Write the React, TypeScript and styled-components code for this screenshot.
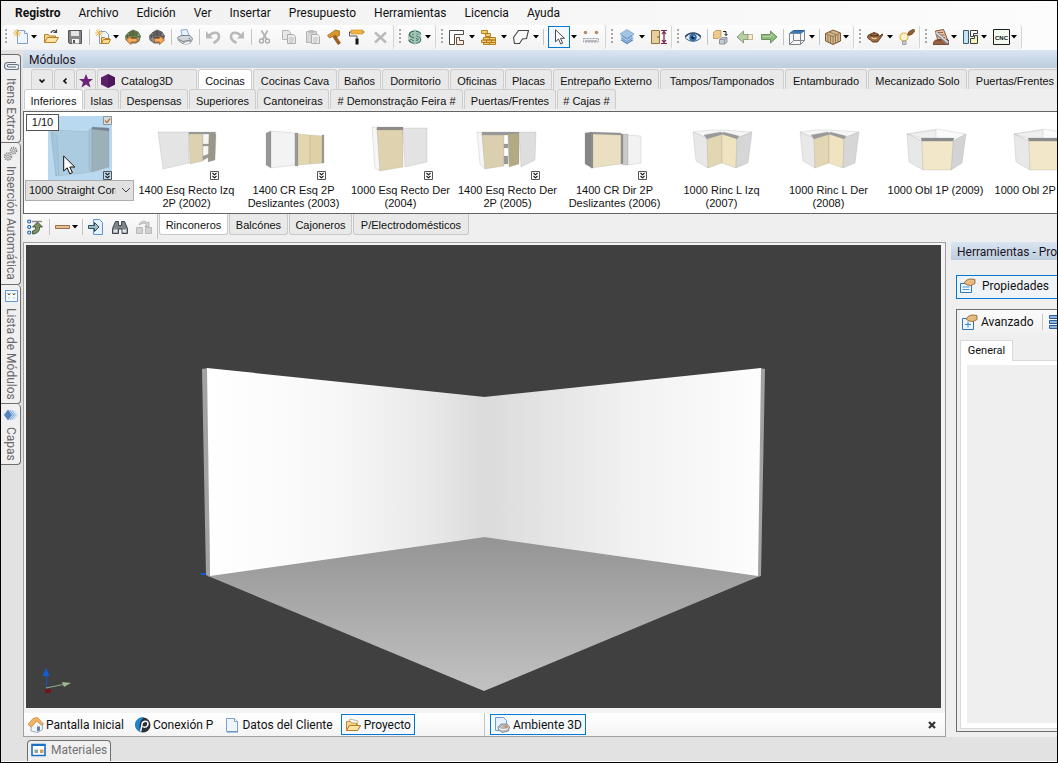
import React from "react";
import styled, { createGlobalStyle, css } from "styled-components";

const UI = 'Roboto, "Noto Sans", sans-serif';
const TAB = '"Liberation Sans", Arial, sans-serif';

const Global = createGlobalStyle`
  * { box-sizing: border-box; }
  body { margin: 0; background: #efefef; color: #111; font: 12px/16px ${UI}; }
  button, select { font: inherit; color: inherit; margin: 0; padding: 0; border: 0; background: none; border-radius: 0; }
  svg { display: block; flex: none; }
`;

/* ---------- window frame ---------- */

const Frame = styled.div`
  height: 100vh;
  min-height: 600px;
  display: flex;
  flex-direction: column;
  border: 1px solid #000;
  overflow: hidden;
  background: #efefef;
`;
const MenuBar = styled.nav`
  flex: none;
  display: flex;
  align-items: center;
  height: 24px;
  padding-left: 5px;
  background: linear-gradient(90deg, #f0f0f0, #fcfcfc);
`;
const MenuItem = styled.button<{ $bold?: boolean }>`
  padding: 0 9px;
  line-height: 22px;
  font-weight: ${(p) => (p.$bold ? 700 : 400)};
  white-space: nowrap;
`;
const ToolBar = styled.div`
  flex: none;
  display: flex;
  gap: 4px;
  height: 25px;
  padding: 0 0 1px 2px;
  background: linear-gradient(90deg, #f0f0f0, #fcfcfc);
`;
const Strip = styled.div`
  flex: none;
  display: flex;
  align-items: center;
  padding-right: 2px;
  border-radius: 3px;
  background: linear-gradient(#fdfdfd, #f3f3f3);
  box-shadow: 1px 0 0 #d4d4d4;
`;
const Grip = styled.span`
  flex: none;
  width: 2px;
  height: 16px;
  margin: 0 2px;
  background: repeating-linear-gradient(#a8a8a8 0 2px, transparent 2px 4px);
`;
const ToolButton = styled.button<{ $w?: number }>`
  flex: none;
  display: flex;
  align-items: center;
  width: ${(p) => p.$w ?? 24}px;
  height: 22px;
  padding-left: 4px;
`;
const ActiveTool = styled(ToolButton)`
  width: 22px;
  margin-left: 3px;
  padding-left: 2px;
  border: 1px solid #0078d7;
  background: #f4f8fc;
`;
const CaretButton = styled.button`
  flex: none;
  display: flex;
  align-items: center;
  width: 9px;
  height: 22px;
`;
const Separator = styled.span`
  flex: none;
  width: 1px;
  height: 16px;
  margin: 0 1px 0 2px;
  background: #c4c4c4;
`;

/* ---------- body ---------- */

const Body = styled.div`
  flex: 1;
  min-height: 0;
  display: flex;
`;
const Rail = styled.aside`
  flex: none;
  display: flex;
  flex-direction: column;
  width: 22px;
  padding-top: 4px;
  background: #e2e2e2;
`;
const RailTab = styled.button<{ $h: number }>`
  display: flex;
  flex-direction: column;
  align-items: center;
  gap: 4px;
  width: 20px;
  height: ${(p) => p.$h}px;
  padding-top: 3px;
  border: 1px solid #6e6e6e;
  border-left: 0;
  border-radius: 0 4px 4px 0;
  background: #f0f0f0;
  color: #686868;
  & + & { border-top: 0; }
  span { writing-mode: vertical-rl; line-height: 18px; white-space: nowrap; }
`;
const Main = styled.main`
  flex: 1;
  min-width: 0;
  display: flex;
  flex-direction: column;
`;
const Caption = styled.h2`
  flex: none;
  height: 18px;
  margin: 0;
  padding-left: 6px;
  font: 12px/20px ${UI};
  color: #1c1326;
  white-space: nowrap;
  overflow: hidden;
  background: linear-gradient(#dae5f1, #bccddd);
`;
const TabRow = styled.div<{ $indent?: number }>`
  flex: none;
  display: flex;
  height: 20px;
  gap: 1px;
  padding-left: ${(p) => p.$indent ?? 0}px;
  overflow: hidden;
`;
const TabRowTop = styled(TabRow)`
  margin-top: 1px;
`;
const Tab = styled.button<{ $w: number; $on?: boolean; $left?: boolean }>`
  flex: none;
  display: flex;
  align-items: center;
  justify-content: ${(p) => (p.$left ? "flex-start" : "center")};
  gap: 5px;
  width: ${(p) => p.$w}px;
  height: 21px;
  padding: 2px 2px 0;
  border: 1px solid #cdcdcd;
  border-bottom: 0;
  border-radius: 3px 3px 0 0;
  background: #e9e9e9;
  font-family: ${TAB};
  font-size: 11px;
  white-space: nowrap;
  ${(p) => p.$on && css`background: #fff;`}
`;
const BottomTab = styled(Tab)`
  border: 1px solid #c8c8c8;
  border-top: 0;
  border-radius: 0 0 3px 3px;
`;
const Gallery = styled.section`
  flex: none;
  position: relative;
  height: 103px;
  margin-top: 2px;
  border: 1px solid #646464;
  border-right: 0;
  background: #fff;
  overflow: hidden;
`;
const Items = styled.ul`
  display: flex;
  margin: 0;
  padding: 4px 0 0 2px;
  list-style: none;
`;
const Item = styled.li`
  flex: none;
  position: relative;
  display: flex;
  flex-direction: column;
  align-items: center;
  width: 107px;
  font: 11px/13px ${TAB};
  text-align: center;
`;
const ItemName = styled.span`
  width: 104px;
  padding-top: 4px;
`;
const Thumb = styled.div<{ $on?: boolean }>`
  position: relative;
  width: 64px;
  height: 64px;
  background: ${(p) => (p.$on ? "#b9d9f1" : "#fff")};
`;
const Corner = styled.span<{ $top?: boolean }>`
  position: absolute;
  right: 0;
  ${(p) => (p.$top ? "top: 0;" : "bottom: 0;")}
`;
const Counter = styled.span`
  position: absolute;
  z-index: 1;
  top: 2px;
  left: 2px;
  width: 33px;
  border: 1px solid #555;
  background: #fff;
  font: 11px/15px ${TAB};
  text-align: center;
`;
const SelectWrap = styled.label`
  position: relative;
  display: block;
  width: 109px;
  svg { position: absolute; right: 3px; top: 6px; pointer-events: none; }
`;
const VariantSelect = styled.select`
  appearance: none;
  display: block;
  width: 100%;
  height: 21px;
  padding: 0 17px 0 3px;
  border: 1px solid #adadad;
  background: #e1e1e1;
  font: 11px/13px ${TAB};
`;
const Pointer = styled.span`
  position: absolute;
  top: 39px;
  left: 37px;
`;
const GroupBar = styled.div`
  flex: none;
  display: flex;
  align-items: flex-start;
  height: 28px;
`;
const GroupTools = styled.div`
  display: flex;
  align-items: center;
  width: 135px;
  height: 25px;
  border-right: 1px solid #c4c4c4;
  background: linear-gradient(#fbfbfb, #efefef);
`;
const Groups = styled.div`
  display: flex;
  gap: 1px;
  padding-left: 1px;
`;
const Workspace = styled.div`
  flex: 1;
  min-height: 0;
  display: flex;
  gap: 5px;
`;
const ViewPanel = styled.section`
  flex: 1;
  min-width: 0;
  display: flex;
  flex-direction: column;
  border: 1px solid #a0a0a0;
  background: #f3f3f3;
`;
const Canvas = styled.div`
  flex: 1;
  min-height: 0;
  display: flex;
  margin: 2px 4px 5px 2px;
  background: #404040;
  svg { flex: 1; min-width: 0; height: 100%; }
`;
const DocBar = styled.div`
  flex: none;
  display: flex;
  height: 23px;
  background: linear-gradient(#fff, #f4f4f4);
`;
const DocGroup = styled.div`
  display: flex;
  align-items: center;
  width: 461px;
  padding-left: 1px;
  gap: 5px;
  border-right: 1px solid #c4c4c4;
`;
const DocTab = styled.button<{ $on?: boolean }>`
  display: flex;
  align-items: center;
  gap: ${(p) => (p.$on ? 3 : 2)}px;
  height: 21px;
  padding: 0 ${(p) => (p.$on ? 3 : 2)}px;
  border: 1px solid ${(p) => (p.$on ? "#0078d7" : "transparent")};
  background: ${(p) => (p.$on ? "#f6fafd" : "none")};
  white-space: nowrap;
`;
const DocOpen = styled.div`
  flex: 1;
  display: flex;
  align-items: center;
  justify-content: space-between;
  padding: 0 9px 0 5px;
`;
const SidePanel = styled.aside`
  flex: none;
  width: 106px;
  display: flex;
  flex-direction: column;
  overflow: hidden;
`;
const ModeButton = styled.button`
  flex: none;
  display: flex;
  align-items: center;
  gap: 6px;
  height: 24px;
  margin: 15px 0 10px 5px;
  padding: 0 0 2px 3px;
  border: 1px solid #0078d7;
  border-right: 0;
  background: #f0f3f6;
`;
const PropBox = styled.div`
  flex: 1;
  min-height: 0;
  display: flex;
  flex-direction: column;
  margin: 0 0 5px 5px;
  padding: 0 0 2px 3px;
  border: 1px solid #6e6e6e;
  border-right: 0;
`;
const PropTools = styled.div`
  flex: none;
  display: flex;
  align-items: center;
  height: 24px;
  margin-bottom: 6px;
  background: linear-gradient(#fbfbfb, #f1f1f1);
`;
const PropTool = styled.button`
  flex: none;
  display: flex;
  align-items: center;
  gap: 3px;
  padding: 0 6px 0 2px;
`;
const RowsTool = styled(PropTool)`
  padding-left: 5px;
`;
const PropTab = styled.button`
  flex: none;
  width: 53px;
  height: 21px;
  margin-bottom: -1px;
  border: 1px solid #d9d9d9;
  border-bottom: 0;
  background: #fff;
  font: 11px/16px ${UI};
  z-index: 1;
`;
const PropPage = styled.div`
  flex: 1;
  padding: 4px 0 5px 6px;
  display: flex;
  border: 1px solid #d9d9d9;
  border-right: 0;
  background: #fff;
`;
const PropEmpty = styled.div`
  flex: 1;
  background: #efefef;
`;
const Dock = styled.footer`
  flex: none;
  display: flex;
  align-items: flex-end;
  height: 25px;
  padding-left: 26px;
  border-bottom: 1px solid #fff;
  background: #e2e2e2;
`;
const DockTab = styled.button`
  display: flex;
  align-items: center;
  gap: 4px;
  width: 84px;
  height: 21px;
  padding: 0 0 2px 3px;
  border: 1px solid #6e6e6e;
  border-bottom: 0;
  border-radius: 4px 4px 0 0;
  background: #f0f0f0;
  color: #727272;
`;

/* ---------- icons ---------- */

const page = <path d="M4.500 1.500h7l3 3v10h-10z" fill="#eef5fc" stroke="#7fa0c8" />;
const spark = <path d="M4 0v8M0 4h8M1 1l6 6M7 1L1 7" stroke="#eab043" strokeWidth=".9" />;
const folder = (
  <>
    <path d="M1.500 13.500v-8h4l1 1.500h6v2" fill="#f5d38c" stroke="#b97f26" />
    <path d="M1.500 13.500l3-5h11l-3 5z" fill="#fde3a4" stroke="#b97f26" />
  </>
);
const box = (c: string, d: string, hi: string) => (
  <>
    <path d="M3.500 3.500L8 1l5 2 2.500 4-1.500 5-3 2H5l-4-3-.5-4z" fill={c} stroke={d} strokeWidth=".8" />
    <path d="M4 4l4-2 4.500 2-1 3H5z" fill={hi} stroke={d} strokeWidth=".7" />
    <path d="M1 7l4 0M11.500 7l3.500 1M3 5.500l-1 4M8 2.500V7M4 8.500h8" stroke={d} />
  </>
);

const art: Record<string, React.ReactNode> = {
  newDoc: <>{page}<path d="M11.500 1.500v3h3" fill="#fff" stroke="#7fa0c8" />{spark}</>,
  open: <>{folder}<path d="M8 4c1-3 4-3 5-1M13.500.5v3h-3" stroke="#444" strokeWidth="1.200" /></>,
  save: <><path d="M1.500 1.500h13v13h-12l-1-1z" fill="#858585" stroke="#565656" /><path d="M4 2h8v5H4z" fill="#e4e4e4" /><path d="M5 10h7v4.500H5z" fill="#f4f4f4" /><path d="M6 11h2v3H6z" fill="#555" /></>,
  importDoc: <><path d="M4.500 2.500h6l3 3v9h-9z" fill="#eef5fc" stroke="#7fa0c8" /><path d="M6.500 14.500v-6h3l1 1h4v1M6.500 14.500l2-4h7l-2 4z" fill="#fbd98e" stroke="#b97f26" />{spark}</>,
  boxIn: <>{box("#8da274", "#4a5b37", "#5f7348")}<path d="M1 11l5-4v2.500h6v3.500H6v2.500z" fill="#f3ab5e" stroke="#b05f22" strokeWidth=".8" /></>,
  boxOut: <>{box("#8c8c8c", "#4a4a4a", "#616161")}<path d="M15.500 11l-5-4v2.500h-5v3.500h5v2.500z" fill="#f3ab5e" stroke="#b05f22" strokeWidth=".8" /></>,
  print: <><path d="M4 1l6-.5 2 6H5z" fill="#e8f2fc" stroke="#6e9cc8" strokeWidth=".8" /><path d="M.5 8.500L4 6.500h9l2.500 3-1 3-9 2-4-3z" fill="#d4d6da" stroke="#6f7680" strokeWidth=".8" /><path d="M2 10.500l4 2 8-1.500" stroke="#7c838c" /><path d="M6 14l6-2 2 2-6 1.500z" fill="#fff" stroke="#8b97a6" strokeWidth=".6" /><circle cx="12.500" cy="9.500" r=".8" fill="#4a9ad8" /></>,
  undo: <><path d="M1 2v7.500h7z" fill="#b9b9b9" /><path d="M4 7.500C7 2.500 14 2.500 14 7.500c0 3-2.500 5-5.500 6.500" stroke="#b9b9b9" strokeWidth="2.600" /></>,
  redo: <><path d="M15 2v7.500H8z" fill="#b9b9b9" /><path d="M12 7.500C9 2.500 2 2.500 2 7.500c0 3 2.500 5 5.500 6.500" stroke="#b9b9b9" strokeWidth="2.600" /></>,
  cut: <><path d="M4.500 1.500l5 8.500M10.500 1.500L6 10" stroke="#b4b4b4" strokeWidth="1.800" /><circle cx="4.500" cy="12" r="2" stroke="#adadad" strokeWidth="1.400" /><circle cx="10.500" cy="12" r="2" stroke="#adadad" strokeWidth="1.400" /></>,
  copy: <><path d="M1.500 1.500h6l2 2v7h-8z" fill="#e6e6e6" stroke="#b5b5b5" /><path d="M6.500 5.500h6l2 2v7h-8z" fill="#e9e9e9" stroke="#adadad" /><path d="M8 9h5M8 11h5M8 13h4" stroke="#bcbcbc" /></>,
  paste: <><path d="M1.500 2.500h10v11h-10z" fill="#d7d7d7" stroke="#b5b5b5" /><path d="M4 1h5v3H4z" fill="#bdbdbd" /><path d="M6.500 5.500h6l2 2v7h-8z" fill="#efefef" stroke="#adadad" /><path d="M8 9h5M8 11h5M8 13h4" stroke="#bcbcbc" /></>,
  hammer: <><path d="M.5 6.500l8-5.500 4 1v4.500l-4 2-2-1.500-4 2z" fill="#d8962c" stroke="#96601a" strokeWidth=".7" /><path d="M6 8l2.500-1.500 5 7.500-2.500 1.500z" fill="#a8621d" stroke="#75420f" strokeWidth=".6" /></>,
  roller: <><path d="M2 1h12v4H2z" fill="#f0b53c" stroke="#c88a1c" strokeWidth=".6" /><path d="M2 3H.5v4h7.500v3M14 3h1.500" stroke="#555" /><path d="M6.500 9.500h3v6h-3z" fill="#151515" /></>,
  del: <path d="M2 3.500l11 10M13 3.500l-11 10" stroke="#b9b9b9" strokeWidth="2.400" />,
  money: <><circle cx="7.500" cy="8" r="6.800" fill="#b6cfc2" /><path d="M12.500 5.500C12 2.500 3.500 2.500 3.500 5.500s9 2 9 5-8.500 3.500-9.500 0" stroke="#41706a" strokeWidth="3.600" /><path d="M12.500 5.500C12 3 4 3 4 5.500s8.500 2 8.500 5-8 3-9 .5M8 .5v15" stroke="#a4cab5" strokeWidth="1.700" /></>,
  wall: <><path d="M.5 1.500h14v4h-9v10h-5z" fill="#fff" stroke="#4d4d4d" /><path d="M7.500 8.500h3v3h4v4h-7z" fill="#f5efe9" stroke="#6b4a36" /></>,
  bricks: <g fill="#f7cd6c" stroke="#ad761a" strokeWidth=".9"><path d="M.5 1.500h6v3h-6zM4.500 4.500h5v3h-5zM2.500 8.500h6v2.500h-6zM8.500 8.500h6v2.500h-6zM.5 11h5v2.500h-5zM5.500 11h5v2.500h-5zM10.500 11h4v2.500h-4zM2.500 13.500h6v2h-6zM8.500 13.500h6v2h-6z" /></g>,
  shape: <path d="M5.500 1.500h10l-2 8-4 .5-3 4.500h-5l-1-6z" fill="#f9f9f9" stroke="#454545" strokeWidth="1.100" />,
  cursor: <path d="M4.500.8v12l3-2.800 2.200 5 2-.9-2.200-4.800h4z" fill="#fff" stroke="#4a4a4a" />,
  ruler: <><path d="M.5 9.500h15v3.500H.5z" fill="#eceef1" stroke="#9aa0aa" strokeDasharray="2 1" /><path d="M3 11v2M5 11v2M7 11v2M9 11v2M11 11v2M13 11v2" stroke="#8a9099" /><circle cx="2.500" cy="3.500" r="1.800" fill="#b98a5e" /><circle cx="13.500" cy="3.500" r="1.800" fill="#b98a5e" /></>,
  layers: <g stroke="#fff" strokeWidth=".6"><path d="M1 11l7-4.500 7 4.500-7 4.500z" fill="#3f73b0" /><path d="M1 9l7-4.500L15 9l-7 4.500z" fill="#5b8cc4" /><path d="M1 7l7-4.500L15 7l-7 4.500z" fill="#7ea7d3" /><path d="M1 5l7-4.500L15 5 8 9.500z" fill="#a5c4e2" stroke="#5f8fc4" /></g>,
  door: <><path d="M.5 1.500h8v13h-8z" fill="#e8cd9f" stroke="#96703f" /><circle cx="7" cy="8" r=".8" fill="#694718" /><path d="M10 1.500h6M10 14.500h6M13 2v12M11 5l2-2.500L15 5M11 11l2 2.500 2-2.500" stroke="#7a1f48" strokeWidth="1.200" /></>,
  eye: <><path d="M0 8.500C4 3 12 3 16 8.500c-4 5-12 5-16 0z" fill="#dfeaf5" stroke="#47627f" /><path d="M0 8C4 2.500 12 2.500 16 8" stroke="#2f4660" strokeWidth="1.400" /><circle cx="8" cy="8.500" r="3.700" fill="#2d6cab" /><circle cx="8" cy="8.500" r="1.600" fill="#0c1e36" /><circle cx="9" cy="7.500" r=".7" fill="#fff" /></>,
  blocks: <><path d="M.5 3.500l2.500-2h5v6l-2.500 2h-5z" fill="#f1c78a" stroke="#b5834a" strokeWidth=".7" /><path d="M6.500 10.500l2.500-2h5v4.500l-2.500 2h-5z" fill="#c6ccd4" stroke="#6e757f" strokeWidth=".7" /><path d="M6.500 10.500h5v4.500M11.500 10.500l2.500-2" stroke="#7c838c" strokeWidth=".7" /><path d="M10 2.500h3v4M11.500 5l1.500 1.500L14.500 5" stroke="#222" /></>,
  back: <><path d="M0 8l6.500-6v3.500H11v5H6.500V14z" fill="#b9cfa6" stroke="#76906a" strokeWidth=".8" /><path d="M11 5.500h4.500v5H11z" fill="#f6edcf" stroke="#a39a7c" strokeWidth=".7" /></>,
  forward: <><path d="M16 8L9.500 2v3.500H.5v5h9V14z" fill="#8dbb7c" stroke="#557f47" strokeWidth=".8" /><path d="M2 7.500h8V5l3 3" stroke="#bfdcb1" strokeWidth=".8" /></>,
  cube: <><path d="M.5 4.500l4-3h11l-4 3z" fill="#2e7cc8" stroke="#3a5d84" /><path d="M.5 4.500h11v11H.5zM15.500 1.500v10l-4 4M4.500 4.500v7M.5 15.500l4-4h11" stroke="#7c858e" /></>,
  wood: <><path d="M.5 4.500L8 1l7.500 3v8L8 15.500.5 12z" fill="#d3b78d" stroke="#6c4c2a" strokeWidth=".9" /><path d="M.5 4.500L8 7.500l7.500-3.500M8 7.500v8M3 6v7M5.500 7v7.500M10.500 7v7M13 6v7M4 3l8 3" stroke="#8a6a44" strokeWidth=".8" /></>,
  teapot: <><path d="M3 5.500c2-2 7-2 8.500 0l1 2L15 5l1 .5-3.500 5L10.500 13h-5L3 10.500C0 10-.5 6 3 5.500z" fill="#9c6c45" stroke="#54321a" strokeWidth=".9" /><path d="M3 6c2.500 1.200 6 1.200 8.500 0M7 3v1.500" stroke="#4f2c13" strokeWidth="1.200" /><path d="M4.500 8.500c1 1 3 1.500 5 .5" stroke="#ecc59a" strokeWidth="1.400" /></>,
  bulb: <><circle cx="5" cy="8" r="4" fill="#fef2cd" stroke="#e3b450" strokeWidth="1.200" /><path d="M3.500 12H7v3.500H3.500z" fill="#c9cdd2" stroke="#7f858c" strokeWidth=".7" /><path d="M8.500 5.500l1.500-3L14.500 0 16 1.500 13.500 5 10 6.500z" fill="#95602f" stroke="#4d2b10" strokeWidth=".6" /></>,
  saw: <><path d="M2.500 2l8-1.500 4 10h-10z" fill="#e5c3a8" stroke="#7a4326" strokeWidth=".9" /><path d="M5 3.500h5M5.500 6h6M6 8.500h6" stroke="#94593a" strokeWidth=".9" /><path d="M0 15.500c1-4 2-4.500 4-4.500h11.500v4.500z" fill="#9b6044" stroke="#532612" strokeWidth=".7" /><path d="M3 4l12 10" stroke="#8d9096" strokeWidth="3" /><path d="M3 3.500l12 10" stroke="#dfe1e4" strokeWidth="1.200" /></>,
  panels: <><path d="M.5 1.500h5v13h-5z" fill="#c4e4f5" stroke="#3f5a68" /><path d="M7.500 1.500h7v3h-4v3h-3z" fill="#fff" stroke="#3d3d3d" /><path d="M7.500 9.500h4v-3h3v8h-7z" fill="#f6f1bd" stroke="#3d3d3d" /></>,
  sort: <><path d="M5 2.500h10" stroke="#8b8b8b" strokeWidth="1.400" /><path d="M10.500 3l5 5h-3c.5 4.500-3 7-7 7v-3c2.500-.5 3.500-1.500 3-4h-3z" fill="#7d9160" stroke="#33422a" strokeWidth=".8" /><g fill="#fff" stroke="#1b61ab" strokeWidth="1.200"><circle cx="2.200" cy="2.500" r="1.500" /><circle cx="2.200" cy="8" r="1.500" /><circle cx="2.200" cy="13.500" r="1.500" /></g></>,
  plank: <path d="M.5 6.500h14v3H.5z" fill="#e2bf95" stroke="#9a7148" />,
  goTo: <><path d="M5.500.500h6l3 3v12h-9z" fill="#e5f2fc" stroke="#5f97cc" /><path d="M.5 6.500h6v-3l4.500 4.500-4.500 4.500v-3h-6z" fill="#9dbcc8" stroke="#2e505f" /></>,
  binoculars: <><path d="M3.500 2.500h3v4h3v-4h3l3 7v5h-5.500V10h-3.500v4.500H.5v-5z" fill="#7e848c" stroke="#33373d" strokeWidth=".9" /><path d="M1.500 10.500h4v3h-4zM10.500 10.500h4v3h-4z" fill="#dfe4e9" /></>,
  swap: <g fill="#d2d2d2" stroke="#b9b9b9"><path d="M.5 8.500h6v6h-6zM9.500 8.500h6v6h-6z" /><path d="M3 6c1-4 6-5 8-2l2-1v4.500H9L10.500 5.500C8.500 3.500 6 4 3 6z" /></g>,
  clip: <path d="M13 4.500H5a3.500 3.500 0 000 7h8.500a2.500 2.500 0 000-5h-8a1.200 1.200 0 000 2.500H13" stroke="#68708a" strokeWidth="1.100" />,
  gears: <g stroke="#8b8b8b" strokeWidth="1"><circle cx="10.500" cy="4.500" r="3" strokeDasharray="1.400 .8" strokeWidth="1.800" /><circle cx="10.500" cy="4.500" r="1.200" /><circle cx="5" cy="10.500" r="3.300" strokeDasharray="1.400 .8" strokeWidth="1.800" /><circle cx="5" cy="10.500" r="1.400" /></g>,
  list: <><path d="M2.500 2.500h12v11h-12z" fill="#f4faff" stroke="#6797c9" /><path d="M5 5h2v2H5zM10 5h2v2h-2z" fill="#7d6a42" /><path d="M4 5.500h4M9 5.500h4" stroke="#a7bbb0" /><path d="M5 10h2M10 10h2" stroke="#a7c4de" /></>,
  layersSide: <g stroke="#fff" strokeWidth=".7"><path d="M11 2l4.500 6L11 14 6.500 8z" fill="#bdd5ec" /><path d="M9 2l4.500 6L9 14 4.500 8z" fill="#93b7de" /><path d="M7 2l4.500 6L7 14 2.500 8z" fill="#6e9bcd" /><path d="M5 2l4.500 6L5 14 .5 8z" fill="#5385bf" /></g>,
  house: <><path d="M3 7v7l7 1.500 4.500-3V7L9.500 3z" fill="#f2f5f9" stroke="#7d93ad" strokeWidth=".7" /><path d="M0 7.500l5-6 4.500-1 6 6.500-2 1L8.500 4 3.500 10z" fill="#f4b561" stroke="#bd7a29" strokeWidth=".7" /><path d="M9 9.500h3v4l-3 1z" fill="#5b82ad" /></>,
  globe: <><circle cx="8" cy="8" r="7.500" fill="#2b3138" /><path d="M9 .5A7.500 7.500 0 006 15.200C3.500 11 4 4 9 .5z" fill="#1f85d0" /><path d="M5.500 14.500c1-3 1-6 2-9 4-2.500 6.500-.5 5 3-1 2-3.500 2-5 1" stroke="#fff" strokeWidth="1.500" /></>,
  doc: <><path d="M2.500 1.500h8l3 3v10h-11z" fill="#eef5fd" stroke="#7fa0c8" /><path d="M10.500 1.500v3h3" stroke="#7fa0c8" fill="#fff" /><path d="M3 15h11" stroke="#5b87bd" /></>,
  folder: <>{folder}<path d="M3 7l2-5 8 2-1 4.500" fill="#fff" stroke="#b9a37a" strokeWidth=".8" /><path d="M1.500 13.500v-9h4l1 1.500h5v2.500h-7z" fill="#f8d58e" stroke="#b97f26" strokeWidth=".8" /><path d="M1.500 13.500l3-5h11l-3 5z" fill="#fde3a4" stroke="#b97f26" /></>,
  render: <><path d="M1.500.500h8l3 3v10h-11z" fill="#e5f1fc" stroke="#6c9cd0" /><path d="M4 10l3-3h6l2.500 3-1 4-6 1.500-4-2.500z" fill="#b7bbc1" stroke="#7b838d" strokeWidth=".8" /><path d="M5 11.500l4 1.500 5-1.500" stroke="#fff" /><circle cx="12" cy="10" r="1.400" fill="#d98b3f" /></>,
  props: <><path d="M.5 5.500h11v9H.5z" fill="#eef6fd" stroke="#2b78bd" /><path d="M2.500 9h7M2.500 11.500h7" stroke="#5b97cf" /><path d="M4 5c2-3 4-4 7-4l4 .5v4l-4 2-4-.5z" fill="#e8bc80" stroke="#8a5a26" strokeWidth=".8" /></>,
  propsPlus: <><path d="M.5 4.500h11v11H.5z" fill="#eef6fd" stroke="#2b78bd" /><path d="M6 7.500v6M3 10.500h6" stroke="#3c84c5" /><path d="M4 5c2-3 4-4 7-4l4 .5v4l-4 2-4-.5z" fill="#e8bc80" stroke="#8a5a26" strokeWidth=".8" /></>,
  rows: <g fill="#8eb4dd" stroke="#2b5e99"><path d="M.5 1.500h15v3H.5zM.5 6.500h15v3H.5zM.5 11.500h15v3H.5z" /></g>,
  materials: <><path d="M1 2.500h13v11H1z" fill="#fff" stroke="#1c70c4" strokeWidth="1.600" /><path d="M1 3h13" stroke="#1c70c4" strokeWidth="2" /><path d="M3.500 7.500h3.500v3.500H3.500z" fill="#8fa38e" /><path d="M9 7.500h3.500v3.500H9z" fill="#d99a60" /></>,
  star: <path d="M8 1l2 5h5l-4 3.300 1.500 5.200L8 11.500l-4.500 3L5 9.300 1 6h5z" fill="#6b2477" />,
  hex: <><path d="M8 1l7 3.500v7L8 15l-7-3.500v-7z" fill="#5c2069" /><path d="M8 1l7 3.500v7L8 15z" fill="#4d1859" /></>,
  down: <path d="M5.500 6.500L8 9l2.500-2.500" stroke="#111" strokeWidth="1.700" />,
  left: <path d="M9.500 5.500L7 8l2.500 2.500" stroke="#111" strokeWidth="1.700" />,
  close: <path d="M5 5l6 6M11 5l-6 6" stroke="#333" strokeWidth="2.200" />,
};

const Icon = ({ name }: { name: string }) => (
  <svg width="16" height="16" viewBox="0 0 16 16" fill="none" aria-hidden="true">{art[name]}</svg>
);
const CncIcon = () => (
  <svg width="17" height="16" viewBox="0 0 17 16" aria-hidden="true">
    <path d="M.5.5h16v15H.5z" fill="#f3faf0" stroke="#1e1e1e" />
    <text x="8.500" y="11" textAnchor="middle" fontFamily="Liberation Sans" fontSize="6" fontWeight="700" fill="#111">CNC</text>
  </svg>
);
const Caret = ({ label }: { label: string }) => (
  <CaretButton aria-label={label}>
    <svg width="7" height="4" viewBox="0 0 7 4"><path d="M1 0h6L4 3.500z" fill="#000" /></svg>
  </CaretButton>
);

/* ---------- toolbar data ---------- */

type Tool = { i: string; w?: number; caret?: boolean; on?: boolean; sep?: boolean };
const strips: Tool[][] = [
  [
    { i: "newDoc", w: 21, caret: true }, { i: "open" }, { i: "save" },
    { i: "importDoc", w: 21, caret: true, sep: true }, { i: "boxIn" }, { i: "boxOut" },
    { i: "print", sep: true }, { i: "undo", sep: true }, { i: "redo" },
    { i: "cut", sep: true }, { i: "copy" }, { i: "paste", w: 22 }, { i: "hammer", w: 22 }, { i: "roller" }, { i: "del", w: 22 },
  ],
  [{ i: "money", w: 21, caret: true }],
  [
    { i: "wall", w: 23, caret: true }, { i: "bricks", w: 23, caret: true }, { i: "shape", w: 23, caret: true },
    { i: "cursor", on: true, caret: true, sep: true }, { i: "ruler" },
  ],
  [{ i: "layers", w: 23, caret: true }, { i: "door", w: 22 }],
  [
    { i: "eye" }, { i: "blocks", sep: true }, { i: "back" }, { i: "forward" },
    { i: "cube", w: 23, caret: true, sep: true }, { i: "wood", w: 21, caret: true, sep: true },
  ],
  [{ i: "teapot", w: 23, caret: true }, { i: "bulb", w: 22 }],
  [{ i: "saw", w: 21, caret: true }, { i: "panels", w: 21, caret: true }, { i: "cnc", w: 21, caret: true }],
];

/* ---------- module thumbnails ---------- */

const W = "#e8e8e8", L = "#f6f6f6", B = "#eadfc0", D = "#9a9a9a";
type Face = [string, string];
const straight: Face[] = [["3,16 9,14 44,16 44,56 8,60", "#abcce0"], ["3,16 9,20 11,58 8,60", "#a3c6dc"], ["41,14 44,12 44,56 41,54", "#a2c4da"], ["44,12 61,13 61,51 44,56", "#9bb0b8"], ["44,11 61,12 61,15 44,13", "#72829a"]];
const rincon: Face[] = [["3,16 20,14 33,14 62,16 47,22 32,18 17,22", L], ["3,16 17,22 18,52 6,45", W], ["17,22 32,18 32,47 18,52", "#e2d6b3"], ["32,18 47,22 46,52 32,47", "#f0e3c0"], ["47,22 62,16 58,47 46,52", "#d6d6d6"], ["14,19 31,16 33,18 17,23", D], ["33,16 49,20 47,23 32,18", D]];
const oblique: Face[] = [["3,18 33,13 62,18 49,25 18,25", "#fafafa"], ["3,18 18,25 19,54 5,46", W], ["49,25 62,18 58,47 47,54", "#d3d3d3"], ["18,25 49,25 47,54 19,54", "#f2e8c9"], ["17,22 50,22 49,25 18,25", "#8c8c8c"], ["3,18 32,14 32,22 17,22", "#efefef"]];
const modules: { name: string; faces: Face[]; more?: boolean }[] = [
  { name: "1400 Esq Recto Izq 2P (2002)", more: true, faces: [["3,16 34,16 34,47 8,53", "#e4e4e4"], ["34,17 48,17 48,45 35,48", "#ddd1af"], ["34,16 61,16 60,18 34,18", D], ["48,18 55,18 55,40 48,45", L], ["48,28 55,28 55,30 48,30", D], ["48,40 54,38 54,41 48,44", D], ["54,18 61,18 60,44 53,46", "#99968a"]] },
  { name: "1400 CR Esq 2P Deslizantes (2003)", more: true, faces: [["4,17 9,15 9,52 4,49", "#979797"], ["9,15 33,17 33,49 9,52", "#f3f3f3"], ["33,17 36,17 36,50 33,50", "#9a9a9a"], ["36,18 48,19 48,48 36,49", "#e4d6ae"], ["48,19 61,20 61,47 48,48", "#dfd0a6"], ["60,19 62,19 62,47 60,47", "#999"]] },
  { name: "1000 Esq Recto Der (2004)", more: true, faces: [["3,11 8,12 11,55 6,52", L], ["8,12 34,12 34,51 11,55", "#dfd2ae"], ["8,11 34,11 34,14 8,14", "#8f8c88"], ["34,12 58,12 58,46 36,51", "#e3e3e3"]] },
  { name: "1400 Esq Recto Der 2P (2005)", more: true, faces: [["1,16 6,17 9,53 4,48", L], ["6,17 28,17 28,50 9,53", "#dacfae"], ["6,16 43,16 43,19 6,19", D], ["28,28 32,28 32,32 28,32", D], ["28,40 32,40 32,48 28,48", D], ["32,18 43,17 43,48 33,51", "#b2aa85"], ["43,16 60,16 59,44 45,51", "#dedede"]] },
  { name: "1400 CR Dir 2P Deslizantes (2006)", more: true, faces: [["2,17 8,16 9,52 2,48", "#868686"], ["8,17 38,18 38,48 8,52", B], ["8,16 38,17 38,19 8,18", "#929292"], ["8,17 10,17 10,52 8,52", "#8d8d8d"], ["38,18 40,18 40,48 38,48", "#8f8f8f"], ["40,18 45,18 45,49 40,49", "#cacaca"], ["45,19 58,20 58,47 45,49", "#f2f2f2"]] },
  { name: "1000 Rinc L Izq (2007)", faces: rincon },
  { name: "1000 Rinc L Der (2008)", faces: rincon },
  { name: "1000 Obl 1P (2009)", faces: oblique },
  { name: "1000 Obl 2P (2010)", faces: oblique },
];

const Cabinet = ({ faces }: { faces: Face[] }) => (
  <svg width="64" height="64" viewBox="0 0 64 64" aria-hidden="true">
    {faces.map(([points, fill]) => (
      <polygon key={points} points={points} fill={fill} stroke="#8c8c8c" strokeOpacity=".3" strokeWidth=".7" />
    ))}
  </svg>
);
const MoreBadge = ({ bg = "#fff" }: { bg?: string }) => (
  <Corner>
    <svg width="9" height="9" viewBox="0 0 9 9" fill="none" aria-hidden="true">
      <path d="M.5.5h8v8h-8z" fill={bg} stroke="#555" />
      <path d="M2.500 2l2 1.800 2-1.800M2.500 5l2 1.800 2-1.800" stroke="#111" strokeWidth="1.100" />
    </svg>
  </Corner>
);

const Room = () => (
  <svg viewBox="26 245 915 463" fill="none" role="img" aria-label="Ambiente 3D">
    <defs>
      <linearGradient id="wl"><stop offset="0" stopColor="#fff" /><stop offset=".45" stopColor="#f8f8f8" /><stop offset=".8" stopColor="#e9e9e9" /><stop offset="1" stopColor="#dcdbdb" /></linearGradient>
      <linearGradient id="wr"><stop offset="0" stopColor="#dcdbdb" /><stop offset=".55" stopColor="#f2f2f2" /><stop offset="1" stopColor="#fdfdfd" /></linearGradient>
      <linearGradient id="fl" x2="0" y2="1"><stop offset="0" stopColor="#929292" /><stop offset="1" stopColor="#c2c2c2" /></linearGradient>
    </defs>
    <polygon points="208,576 208,570 484,530 760,570 760,576 484,691" fill="url(#fl)" />
    <polygon points="202,369 208,368 210,577 206,575" fill="#a2a2a2" />
    <polygon points="759,368 765,369 761,576 757,577" fill="#a2a2a2" />
    <polygon points="207,368 485,397 485,537 210,576" fill="url(#wl)" />
    <polygon points="484,397 761,368 758,576 484,537" fill="url(#wr)" />
    <path d="M201 574h5" stroke="#1557d8" strokeWidth="2" />
    <path d="M46.500 688v-12" stroke="#1557c8" />
    <path d="M42.500 676l3.500-8 3.500 8z" fill="#0f5fd6" />
    <path d="M46 688l17-3.500" stroke="#8fae86" />
    <path d="M62 682l9 1-7 4z" fill="#9dbb92" />
    <path d="M45 689h6v4h-6z" fill="#73151b" />
  </svg>
);

/* ---------- static lists ---------- */

const menus = ["Registro", "Archivo", "Edición", "Ver", "Insertar", "Presupuesto", "Herramientas", "Licencia", "Ayuda"];
const categories: [string, number][] = [
  ["Cocinas", 54], ["Cocinas Cava", 84], ["Baños", 43], ["Dormitorio", 67], ["Oficinas", 54], ["Placas", 47],
  ["Entrepaño Externo", 106], ["Tampos/Tamponados", 124], ["Entamburado", 82], ["Mecanizado Solo", 99], ["Puertas/Frentes", 94],
];
const families: [string, number][] = [
  ["Inferiores", 59], ["Islas", 35], ["Despensas", 68], ["Superiores", 67], ["Cantoneiras", 72],
  ["# Demonstração Feira #", 133], ["Puertas/Frentes", 92], ["# Cajas #", 59],
];
const groups: [string, number][] = [["Rinconeros", 69], ["Balcónes", 59], ["Cajoneros", 63], ["P/Electrodomésticos", 116]];
const railTabs: [string, string, number][] = [
  ["clip", "Itens Extras", 89], ["gears", "Inserción Automática", 142], ["list", "Lista de Módulos", 119], ["layersSide", "Capas", 61],
];

export default function App() {
  return (
    <>
      <Global />
      <Frame>
        <MenuBar>
          {menus.map((m, n) => <MenuItem key={m} $bold={n === 0}>{m}</MenuItem>)}
        </MenuBar>
        <ToolBar>
          {strips.map((tools, s) => (
            <Strip key={s}>
              <Grip />
              {tools.map((t) => {
                const Button = t.on ? ActiveTool : ToolButton;
                return (
                  <React.Fragment key={t.i}>
                    {t.sep && <Separator />}
                    <Button $w={t.w} aria-label={t.i}>{t.i === "cnc" ? <CncIcon /> : <Icon name={t.i} />}</Button>
                    {t.caret && <Caret label={`${t.i} menu`} />}
                  </React.Fragment>
                );
              })}
            </Strip>
          ))}
        </ToolBar>
        <Body>
          <Rail>
            {railTabs.map(([icon, label, h]) => (
              <RailTab key={label} $h={h}><Icon name={icon} /><span>{label}</span></RailTab>
            ))}
          </Rail>
          <Main>
            <Caption>Módulos</Caption>
            <TabRowTop $indent={8}>
              <Tab $w={22} aria-label="Lista"><Icon name="down" /></Tab>
              <Tab $w={21} aria-label="Anterior"><Icon name="left" /></Tab>
              <Tab $w={20} aria-label="Favoritos"><Icon name="star" /></Tab>
              <Tab $w={100} $left><Icon name="hex" />Catalog3D</Tab>
              {categories.map(([c, w], n) => <Tab key={c} $w={w} $on={n === 0}>{c}</Tab>)}
            </TabRowTop>
            <TabRow $indent={1}>
              {families.map(([c, w], n) => <Tab key={c} $w={w} $on={n === 0}>{c}</Tab>)}
            </TabRow>
            <Gallery>
              <Counter>1/10</Counter>
              <Items>
                <Item>
                  <Thumb $on>
                    <Cabinet faces={straight} />
                    <Corner $top>
                      <svg width="9" height="9" viewBox="0 0 9 9" fill="none" aria-hidden="true">
                        <path d="M.5.5h8v8h-8z" fill="#d8dde0" stroke="#8a959c" />
                        <path d="M2 4.500l2 2 3-4" stroke="#b5793c" strokeWidth="1.300" />
                      </svg>
                    </Corner>
                    <MoreBadge bg="#b9d9f1" />
                  </Thumb>
                  <SelectWrap>
                    <VariantSelect aria-label="Variante"><option>1000 Straight Corner</option></VariantSelect>
                    <svg width="10" height="8" viewBox="0 0 10 8" fill="none"><path d="M1 2l4 4 4-4" stroke="#444" /></svg>
                  </SelectWrap>
                  <Pointer>
                    <svg width="13" height="20" viewBox="0 0 13 20"><path d="M.7 1v15l3.500-3.200 2.600 6 2.600-1.200-2.600-5.600h5z" fill="#fff" stroke="#111" /></svg>
                  </Pointer>
                </Item>
                {modules.map((m) => (
                  <Item key={m.name}>
                    <Thumb><Cabinet faces={m.faces} />{m.more && <MoreBadge />}</Thumb>
                    <ItemName>{m.name}</ItemName>
                  </Item>
                ))}
              </Items>
            </Gallery>
            <GroupBar>
              <GroupTools>
                <ToolButton $w={24} aria-label="Ordenar"><Icon name="sort" /></ToolButton>
                <Separator />
                <ToolButton $w={20} aria-label="Tablero"><Icon name="plank" /></ToolButton>
                <Caret label="Tablero menu" />
                <Separator />
                <ToolButton aria-label="Insertar"><Icon name="goTo" /></ToolButton>
                <ToolButton aria-label="Buscar"><Icon name="binoculars" /></ToolButton>
                <ToolButton $w={20} aria-label="Sustituir"><Icon name="swap" /></ToolButton>
              </GroupTools>
              <Groups>
                {groups.map(([g, w], n) => <BottomTab key={g} $w={w} $on={n === 0}>{g}</BottomTab>)}
              </Groups>
            </GroupBar>
            <Workspace>
              <ViewPanel>
                <Canvas><Room /></Canvas>
                <DocBar>
                  <DocGroup>
                    <DocTab><Icon name="house" />Pantalla Inicial</DocTab>
                    <DocTab><Icon name="globe" />Conexión P</DocTab>
                    <DocTab><Icon name="doc" />Datos del Cliente</DocTab>
                    <DocTab $on><Icon name="folder" />Proyecto</DocTab>
                  </DocGroup>
                  <DocOpen>
                    <DocTab $on><Icon name="render" />Ambiente 3D</DocTab>
                    <ToolButton $w={16} aria-label="Cerrar"><Icon name="close" /></ToolButton>
                  </DocOpen>
                </DocBar>
              </ViewPanel>
              <SidePanel>
                <Caption>Herramientas - Pro</Caption>
                <ModeButton><Icon name="props" />Propiedades</ModeButton>
                <PropBox>
                  <PropTools>
                    <PropTool><Icon name="propsPlus" />Avanzado</PropTool>
                    <Separator />
                    <RowsTool aria-label="Filas"><Icon name="rows" /></RowsTool>
                  </PropTools>
                  <PropTab>General</PropTab>
                  <PropPage><PropEmpty /></PropPage>
                </PropBox>
              </SidePanel>
            </Workspace>
          </Main>
        </Body>
        <Dock>
          <DockTab><Icon name="materials" />Materiales</DockTab>
        </Dock>
      </Frame>
    </>
  );
}
